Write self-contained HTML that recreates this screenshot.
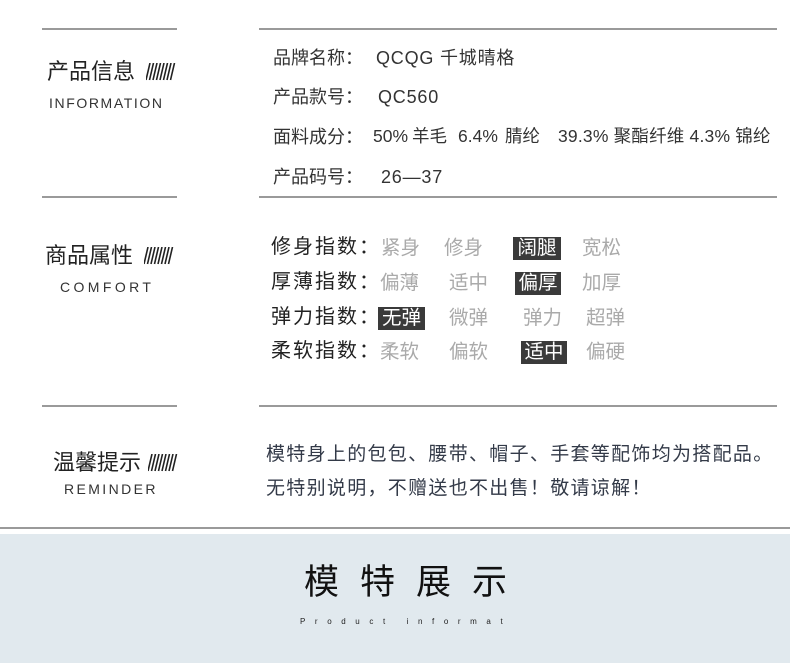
<!DOCTYPE html>
<html><head><meta charset="utf-8"><style>
*{margin:0;padding:0;box-sizing:border-box}
body{width:790px;height:663px;background:#fff;position:relative;overflow:hidden;font-family:"Liberation Sans","Noto Sans CJK SC",sans-serif;color:#222}
.a{position:absolute;white-space:nowrap;line-height:1}
.hl{position:absolute;height:1.5px;background:#9a9a9a}
.t{font-size:22px;color:#222}
.en{font-size:14px;letter-spacing:1.6px;color:#333}
.i{font-size:18px;color:#333}
.v{font-size:18px;color:#333;letter-spacing:0.8px}
.w{font-size:17.5px;color:#333}
.r{font-size:20px;color:#222;letter-spacing:2px}
.g{font-size:19.5px;color:#aaa}
.b{position:absolute;background:#3a3a3a;color:#fff;font-size:19.5px;line-height:23px;height:23px;text-align:center}
.m{font-size:19px;color:#333a48}
</style></head><body>
<div class="hl" style="left:42px;top:28px;width:135px"></div>
<div class="hl" style="left:259px;top:28px;width:518px"></div>
<div class="hl" style="left:42px;top:196px;width:135px"></div>
<div class="hl" style="left:259px;top:196px;width:518px"></div>
<div class="hl" style="left:42px;top:405px;width:135px"></div>
<div class="hl" style="left:259px;top:405px;width:518px"></div>
<div class="hl" style="left:0;top:527px;width:790px"></div>
<div style="position:absolute;left:0;top:534px;width:790px;height:129px;background:#e1e9ee"></div>

<svg width="0" height="0" style="position:absolute"><defs><g id="st" stroke="#222" stroke-width="1.6"><line x1="4" y1="0" x2="0" y2="17"/><line x1="7.5" y1="0" x2="3.5" y2="17"/><line x1="11" y1="0" x2="7" y2="17"/><line x1="14.5" y1="0" x2="10.5" y2="17"/><line x1="18" y1="0" x2="14" y2="17"/><line x1="21.5" y1="0" x2="17.5" y2="17"/><line x1="25" y1="0" x2="21" y2="17"/><line x1="28.5" y1="0" x2="24.5" y2="17"/></g></defs></svg>

<div class="a t" style="left:47px;top:61px">产品信息</div>
<svg class="a" style="left:146px;top:63px" width="30" height="18"><use href="#st"/></svg>
<div class="a en" style="left:49px;top:96px">INFORMATION</div>

<div class="a t" style="left:45px;top:245px">商品属性</div>
<svg class="a" style="left:144px;top:247px" width="30" height="18"><use href="#st"/></svg>
<div class="a en" style="left:60px;top:280px;letter-spacing:3.4px">COMFORT</div>

<div class="a t" style="left:53px;top:452px">温馨提示</div>
<svg class="a" style="left:148px;top:454px" width="30" height="18"><use href="#st"/></svg>
<div class="a en" style="left:64px;top:482px;letter-spacing:2.4px">REMINDER</div>

<div class="a i" style="left:273px;top:49px">品牌名称：</div>
<div class="a v" style="left:376px;top:49px">QCQG 千城晴格</div>
<div class="a i" style="left:273px;top:88px">产品款号：</div>
<div class="a v" style="left:378px;top:88px">QC560</div>
<div class="a i" style="left:273px;top:128px">面料成分：</div>
<div class="a w" style="left:373px;top:128px">50%</div>
<div class="a w" style="left:412px;top:128px">羊毛</div>
<div class="a w" style="left:458px;top:128px">6.4%</div>
<div class="a w" style="left:505px;top:128px">腈纶</div>
<div class="a w" style="left:558px;top:128px;letter-spacing:0.2px">39.3% 聚酯纤维 4.3% 锦纶</div>
<div class="a i" style="left:273px;top:168px">产品码号：</div>
<div class="a v" style="left:381px;top:168px">26—37</div>

<div class="a r" style="left:271px;top:237px">修身指数：</div>
<div class="a g" style="left:381px;top:239px">紧身</div>
<div class="a g" style="left:444px;top:239px">修身</div>
<div class="b" style="left:513px;top:237px;width:48px">阔腿</div>
<div class="a g" style="left:582px;top:239px">宽松</div>

<div class="a r" style="left:271px;top:272px">厚薄指数：</div>
<div class="a g" style="left:380px;top:274px">偏薄</div>
<div class="a g" style="left:449px;top:274px">适中</div>
<div class="b" style="left:515px;top:272px;width:46px">偏厚</div>
<div class="a g" style="left:582px;top:274px">加厚</div>

<div class="a r" style="left:271px;top:307px">弹力指数：</div>
<div class="b" style="left:378px;top:307px;width:47px">无弹</div>
<div class="a g" style="left:449px;top:309px">微弹</div>
<div class="a g" style="left:523px;top:309px">弹力</div>
<div class="a g" style="left:586px;top:309px">超弹</div>

<div class="a r" style="left:271px;top:341px">柔软指数：</div>
<div class="a g" style="left:380px;top:343px">柔软</div>
<div class="a g" style="left:449px;top:343px">偏软</div>
<div class="b" style="left:521px;top:341px;width:46px">适中</div>
<div class="a g" style="left:586px;top:343px">偏硬</div>

<div class="a m" style="left:266px;top:445px;letter-spacing:1.3px">模特身上的包包、腰带、帽子、手套等配饰均为搭配品。</div>
<div class="a m" style="left:266px;top:479px;letter-spacing:1.3px">无特别说明，不赠送也不出售！敬请谅解！</div>

<div class="a" style="left:304px;top:565px;font-size:35px;letter-spacing:21px;color:#111">模特展示</div>
<div class="a" style="left:300px;top:618px;font-size:8px;letter-spacing:9.6px;color:#222">Product informat</div>
</body></html>
